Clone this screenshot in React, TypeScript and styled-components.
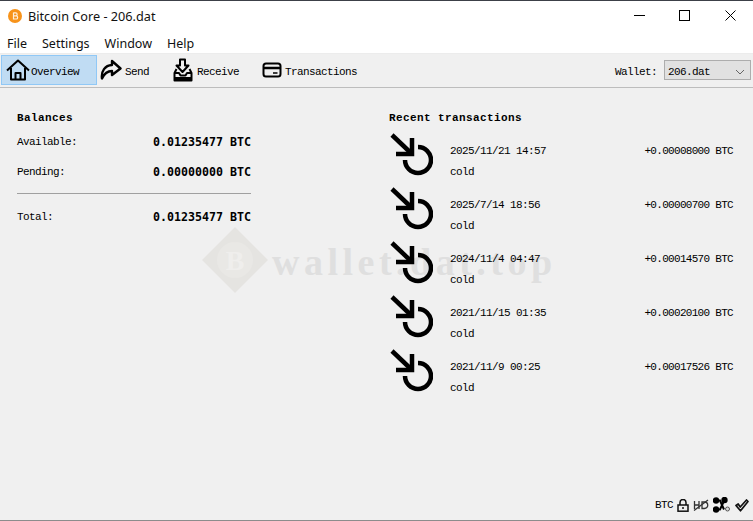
import React from "react";
import styled, { createGlobalStyle } from "styled-components";

const Global = createGlobalStyle`
  html, body { margin: 0; padding: 0; background: #f0f0f0; }
  #root { width: 753px; height: 521px; overflow: hidden; }
`;

const Window = styled.div`
  position: relative;
  width: 753px;
  height: 521px;
  display: flex;
  flex-direction: column;
  background: #f0f0f0;
  border-top: 1px solid #3c4048;
  border-bottom: 1px solid #8c8c8c;
  box-sizing: border-box;
  font-family: "Liberation Mono", monospace;
  color: #000;
`;

const TitleBar = styled.div`
  height: 29px;
  background: #fff;
  display: flex;
  align-items: center;
  padding-left: 8px;
  font: 12.7px "Noto Sans", sans-serif;
`;

const Title = styled.span`
  flex: 1;
  margin-left: 6px;
  color: #111;
`;

const WinButton = styled.div`
  width: 45.5px;
  height: 29px;
  display: flex;
  align-items: center;
  justify-content: center;
`;

const MenuBar = styled.div`
  height: 23px;
  box-sizing: content-box;
  background: #fff;
  display: flex;
  align-items: center;
  padding-left: 7px;
  gap: 15px;
  font: 12.5px "Noto Sans", sans-serif;
  color: #111;
  border-bottom: 1px solid #ececec;
`;

const MenuItem = styled.span`
  margin-top: 3px;
`;

const ToolBar = styled.div`
  height: 34px;
  box-sizing: border-box;
  display: flex;
  align-items: center;
  padding: 0 2px 1px 1px;
  background: #f0f0f0;
  border-bottom: 1px solid #bdbdbd;
`;

const ToolButton = styled.div<{ $active?: boolean; $width: number; $pad: number; $gap: number }>`
  width: ${(p) => p.$width}px;
  height: 30px;
  box-sizing: border-box;
  display: flex;
  align-items: center;
  padding-left: ${(p) => p.$pad}px;
  gap: ${(p) => p.$gap}px;
  background: ${(p) => (p.$active ? "#c0dcf3" : "transparent")};
  border: 1px solid ${(p) => (p.$active ? "#90c8f6" : "transparent")};
`;

const ToolLabel = styled.span`
  font-size: 11px;
  letter-spacing: -0.6px;
  line-height: 14px;
  margin-top: 3px;
`;

const Spacer = styled.div`
  flex: 1;
`;

const WalletLabel = styled.span`
  font-size: 11px;
  letter-spacing: -0.6px;
  margin: 3px 7px 0 0;
`;

const Combo = styled.div`
  width: 87px;
  height: 20px;
  box-sizing: border-box;
  background: #e1e1e1;
  border: 1px solid #adadad;
  display: flex;
  align-items: center;
  justify-content: space-between;
  padding: 3px 5px 0 3px;
  font-size: 11px;
  letter-spacing: -0.6px;
`;

const Main = styled.div`
  position: relative;
  flex: 1;
  display: flex;
  padding: 23px 20px 0 17px;
`;

const Watermark = styled.div`
  position: absolute;
  left: 202px;
  top: 139px;
  display: flex;
  align-items: center;
  pointer-events: none;
`;

const WatermarkText = styled.span`
  font: bold 38px "Liberation Serif", serif;
  letter-spacing: 4.5px;
  line-height: 44px;
  color: #dfdfdf;
  margin: 3px 0 0 4px;
  white-space: nowrap;
`;

const Balances = styled.section`
  position: relative;
  width: 234px;
  margin-right: 138px;
`;

const Recent = styled.section`
  position: relative;
  flex: 1;
`;

const Heading = styled.h2`
  margin: 0;
  height: 14px;
  font-size: 11px;
  line-height: 14px;
  font-weight: bold;
  letter-spacing: 0.4px;
`;

const BalanceRow = styled.div<{ $mt: number }>`
  display: flex;
  justify-content: space-between;
  align-items: center;
  height: 16px;
  margin-top: ${(p) => p.$mt}px;
`;

const BalanceLabel = styled.span`
  font-size: 11px;
  letter-spacing: -0.6px;
`;

const Amount = styled.span`
  font: bold 11.63px "DejaVu Sans Mono", monospace;
`;

const Rule = styled.hr`
  margin: 13px 0 0;
  border: 0;
  height: 1px;
  background: #a0a0a0;
`;

const TxList = styled.div`
  margin-top: 7px;
  display: flex;
  flex-direction: column;
`;

const TxRow = styled.div`
  height: 54px;
  display: flex;
  align-items: flex-start;
`;

const TxBody = styled.div`
  flex: 1;
  margin-left: 17px;
  padding-top: 9px;
  font-size: 11px;
  letter-spacing: -0.6px;
`;

const TxLine = styled.div`
  display: flex;
  justify-content: space-between;
  height: 21px;
  line-height: 20px;
`;

const TxAmount = styled.span`
  letter-spacing: -0.7px;
`;

const StatusBar = styled.div`
  height: 30px;
  display: flex;
  align-items: center;
  justify-content: flex-end;
  padding: 0 4px 0 0;
  gap: 4px;
  font-size: 11px;
  letter-spacing: -0.6px;
`;

const CoinIcon = () => (
  <svg width="14" height="14" viewBox="0 0 14 14">
    <circle cx="7" cy="7" r="7" fill="#f7931a" />
    <path d="M5.5 3.5v7M5.5 3.8h2.4c1.6 0 1.6 3 0 3H5.500M5.500 6.800h2.800c1.800 0 1.800 3.200 0 3.200H5.500" fill="none" stroke="#fff" strokeWidth="1.200" opacity=".85" />
  </svg>
);

const TxIcon = () => (
  <svg width="44" height="44" viewBox="0 0 44 44" fill="none" stroke="#000" strokeWidth="4.500">
    <path d="M3 3l20 19" />
    <path d="M23 6v16H7" />
    <path d="M29 15a13 13 0 1 1-13 13" />
  </svg>
);

const HomeIcon = () => (
  <svg width="24" height="22" viewBox="0 0 24 22" fill="none" stroke="#000" strokeWidth="2" strokeLinejoin="round">
    <path d="M1 11.500L12 1.500l11 10M5 9v11.500h14V9" />
    <path d="M9.500 20.500V14h5v6.500" />
  </svg>
);

const SendIcon = () => (
  <svg width="23" height="22" viewBox="0 0 23 22" fill="none" stroke="#000" strokeWidth="2.400" strokeLinejoin="round">
    <path d="M13 2l8.500 7.500L13 16v-4c-4.500 0-7.500 2-10 7.500C2 12 6 6.500 13 6z" />
  </svg>
);

const ReceiveIcon = () => (
  <svg width="20" height="24" viewBox="0 0 20 24" fill="none" stroke="#000" strokeWidth="2">
    <path d="M7 1.500h5v6h3.500L9.500 14 3.500 7.500H7z" strokeLinejoin="round" />
    <path d="M3.500 11L1.500 15v7.500h17V15l-2-4M1.500 15H6l1.500 2.500h5L14 15h4.500" strokeLinejoin="round" />
    <path d="M1.500 20.500h17" strokeWidth="3" />
  </svg>
);

const CardIcon = () => (
  <svg width="20" height="16" viewBox="0 0 20 16" fill="none" stroke="#000" strokeWidth="2">
    <rect x="1.500" y="1.500" width="17" height="13" rx="2.500" />
    <path d="M1.500 6h17" strokeWidth="2.500" />
    <path d="M11 11h4.500" strokeWidth="1.500" />
  </svg>
);

const MarkIcon = () => (
  <svg width="66" height="66" viewBox="0 0 66 66">
    <path d="M33 0l33 33-33 33L0 33z" fill="#e5e4e1" />
    <circle cx="33" cy="33" r="18" fill="#e9e8e5" />
    <text x="33" y="43" textAnchor="middle" fontFamily="Liberation Serif" fontWeight="bold" fontSize="28" fill="#efeeec">B</text>
  </svg>
);

const LockIcon = () => (
  <svg width="12" height="13" viewBox="0 0 12 13" fill="none" stroke="#111" strokeWidth="1.500">
    <path d="M3 6V3.500a3 3 0 0 1 6 0V6" />
    <rect x="1" y="6" width="10" height="6.200" />
    <path d="M5 9h2" />
  </svg>
);

const HdIcon = () => (
  <svg width="16" height="12" viewBox="0 0 16 12" fill="none" stroke="#333" strokeWidth="1.300">
    <path d="M1.500 2v8M6 2v8M1.500 6H6M9 3v6.500h2.500a3 3 0 0 0 0-6.500z" />
    <path d="M1 11.500L15 1" />
  </svg>
);

const NetIcon = () => (
  <svg width="18" height="16" viewBox="0 0 18 16" fill="none" stroke="#000" strokeWidth="2">
    <path d="M3 3.500h4l4 9M11 4L7 12.500H3" />
    <circle cx="3" cy="3.500" r="2.200" fill="#000" />
    <circle cx="3" cy="12.500" r="2.200" fill="#000" />
    <circle cx="11.500" cy="3" r="2.200" fill="#000" />
    <circle cx="14.500" cy="12" r="2" fill="#ddd" stroke="#555" strokeWidth="1" />
  </svg>
);

const CheckIcon = () => (
  <svg width="14" height="13" viewBox="0 0 14 13" fill="none" stroke="#111" strokeWidth="1.700" strokeLinejoin="round">
    <path d="M1 6.500l2.200-1.500 2 3L11.500 1 13 2.500 5.500 11.800z" />
  </svg>
);

const txs = [
  ["2025/11/21 14:57", "+0.00008000 BTC"],
  ["2025/7/14 18:56", "+0.00000700 BTC"],
  ["2024/11/4 04:47", "+0.00014570 BTC"],
  ["2021/11/15 01:35", "+0.00020100 BTC"],
  ["2021/11/9 00:25", "+0.00017526 BTC"],
];

export default function App() {
  return (
    <Window>
      <Global />
      <TitleBar>
        <CoinIcon />
        <Title>Bitcoin Core - 206.dat</Title>
        <WinButton>
          <svg width="11" height="11" viewBox="0 0 11 11"><path d="M0 5.500h11" stroke="#000" /></svg>
        </WinButton>
        <WinButton>
          <svg width="11" height="11" viewBox="0 0 11 11"><rect x=".5" y=".5" width="10" height="10" fill="none" stroke="#000" /></svg>
        </WinButton>
        <WinButton>
          <svg width="11" height="11" viewBox="0 0 11 11"><path d="M.5.500l10 10M10.500.500l-10 10" stroke="#000" /></svg>
        </WinButton>
      </TitleBar>
      <MenuBar>
        <MenuItem>File</MenuItem>
        <MenuItem>Settings</MenuItem>
        <MenuItem>Window</MenuItem>
        <MenuItem>Help</MenuItem>
      </MenuBar>
      <ToolBar>
        <ToolButton $active $width={96} $pad={4} $gap={1}><HomeIcon /><ToolLabel>Overview</ToolLabel></ToolButton>
        <ToolButton $width={72} $pad={1} $gap={3}><SendIcon /><ToolLabel>Send</ToolLabel></ToolButton>
        <ToolButton $width={90} $pad={3} $gap={4}><ReceiveIcon /><ToolLabel>Receive</ToolLabel></ToolButton>
        <ToolButton $width={110} $pad={2} $gap={3}><CardIcon /><ToolLabel>Transactions</ToolLabel></ToolButton>
        <Spacer />
        <WalletLabel>Wallet:</WalletLabel>
        <Combo>
          <span>206.dat</span>
          <svg width="10" height="6" viewBox="0 0 10 6"><path d="M1 1l4 4 4-4" fill="none" stroke="#666" /></svg>
        </Combo>
      </ToolBar>
      <Main>
        <Watermark>
          <MarkIcon />
          <WatermarkText>wallet.dat.top</WatermarkText>
        </Watermark>
        <Balances>
          <Heading>Balances</Heading>
          <BalanceRow $mt={9}><BalanceLabel>Available:</BalanceLabel><Amount>0.01235477 BTC</Amount></BalanceRow>
          <BalanceRow $mt={14}><BalanceLabel>Pending:</BalanceLabel><Amount>0.00000000 BTC</Amount></BalanceRow>
          <Rule />
          <BalanceRow $mt={15}><BalanceLabel>Total:</BalanceLabel><Amount>0.01235477 BTC</Amount></BalanceRow>
        </Balances>
        <Recent>
          <Heading>Recent transactions</Heading>
          <TxList>
            {txs.map(([date, amount]) => (
              <TxRow key={date}>
                <TxIcon />
                <TxBody>
                  <TxLine><span>{date}</span><TxAmount>{amount}</TxAmount></TxLine>
                  <TxLine><span>cold</span></TxLine>
                </TxBody>
              </TxRow>
            ))}
          </TxList>
        </Recent>
      </Main>
      <StatusBar>
        <span>BTC</span>
        <LockIcon />
        <HdIcon />
        <NetIcon />
        <CheckIcon />
      </StatusBar>
    </Window>
  );
}
